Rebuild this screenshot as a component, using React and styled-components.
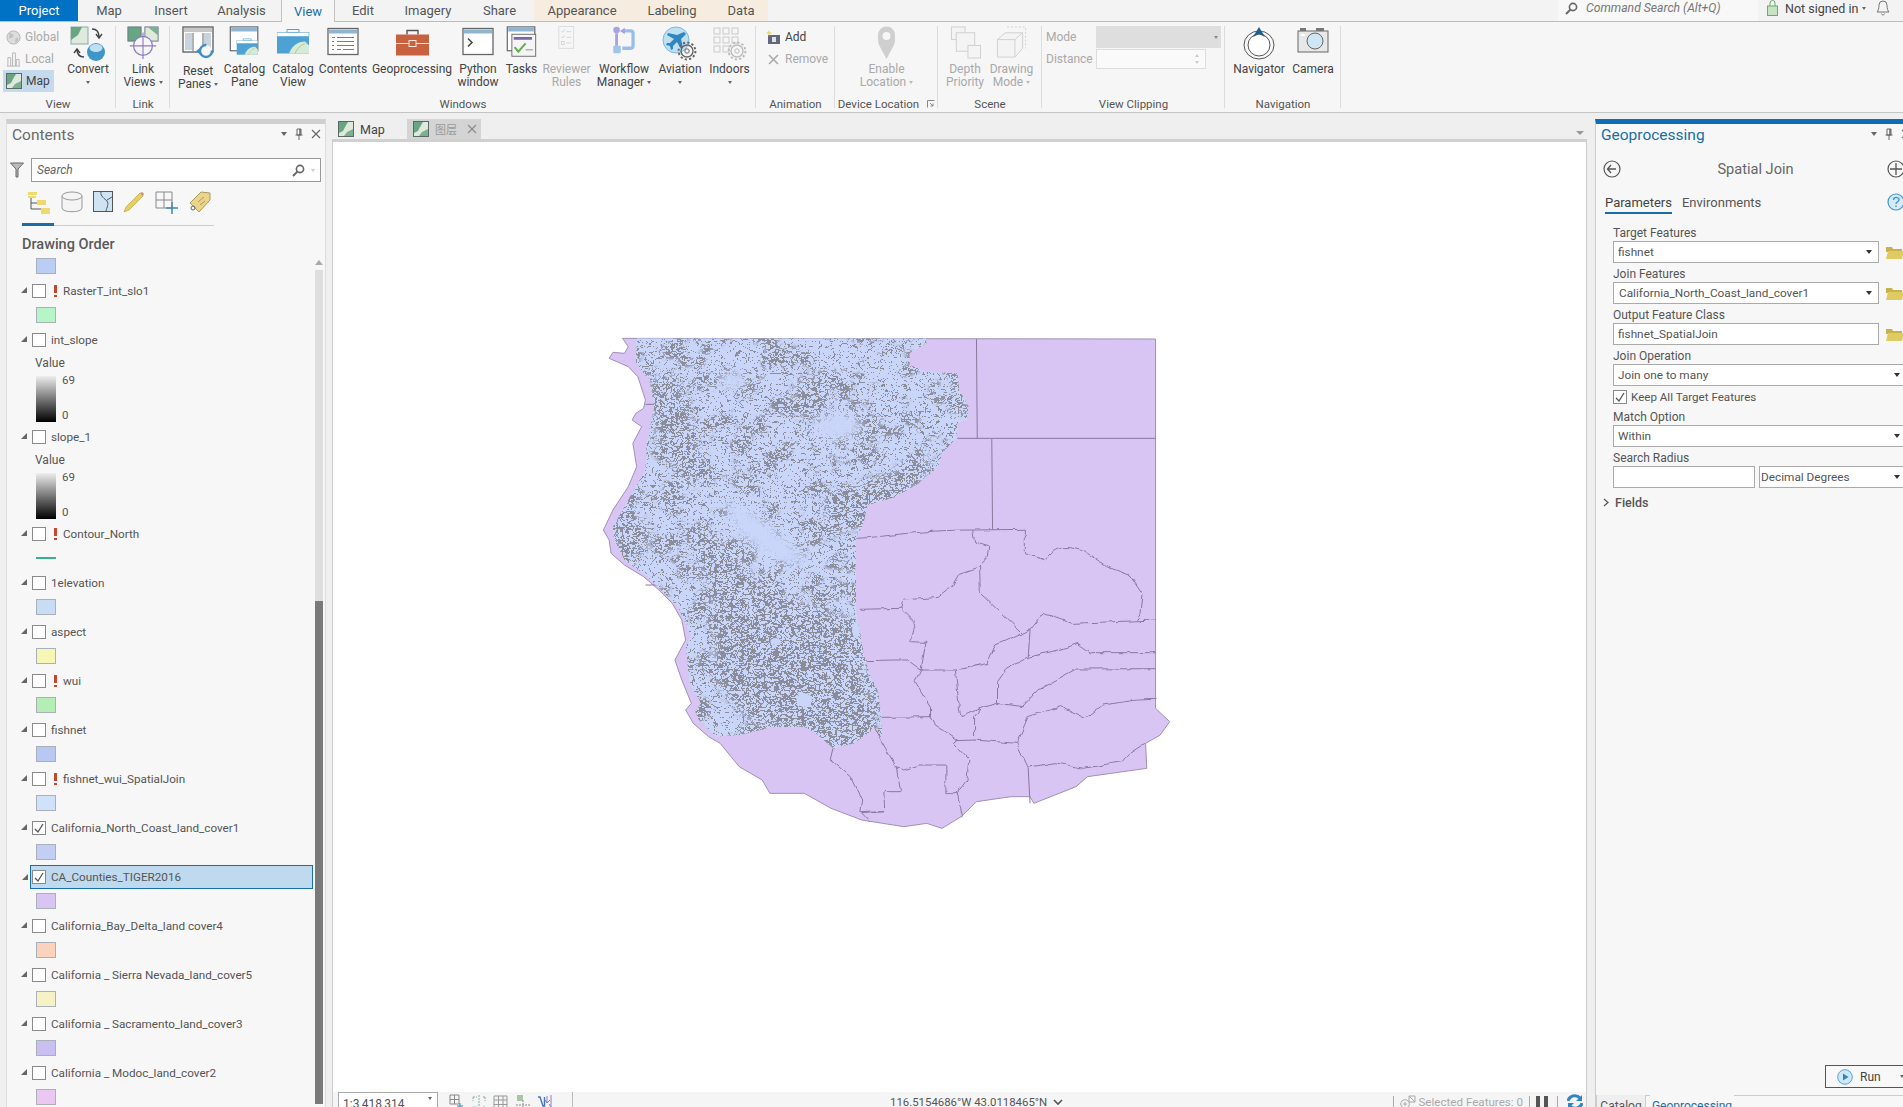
import React from "react";
import styled, { createGlobalStyle } from "styled-components";

const Global = createGlobalStyle`
  html, body { margin: 0; padding: 0; background: #efefef; overflow: hidden; }
  * { box-sizing: border-box; }
  body { font-family: Roboto, "Liberation Sans", "Noto Sans CJK SC", sans-serif; }
`;

const Page = styled.div`
  width: 1903px; height: 1107px; display: flex; flex-direction: column; overflow: hidden;
  background: #efefef; color: #444; font-size: 12px;
`;
const TopBar = styled.div`
  height: 22px; flex: none; display: flex; background: #f3f3f3; border-bottom: 1px solid #bdbdbd;
`;
const Tab = styled.div`
  width: ${p => p.$w}px; height: ${p => (p.$active ? 22 : 21)}px; display: flex; align-items: center; justify-content: center;
  font-size: 13px; padding-bottom: 0;
  color: ${p => (p.$project ? "#fff" : p.$active ? "#1a6ea8" : "#555")};
  background: ${p => (p.$project ? "#0072c6" : p.$active ? "#f6f6f6" : p.$ctx ? "#f6ecdf" : "transparent")};
  ${p => p.$active && "border: 1px solid #c4c4c4; border-width: 0 1px;"}
`;
const Spacer = styled.div`flex: 1;`;
const CommandSearch = styled.div`
  width: 200px; height: 21px; background: #f8f8f8; display: flex; align-items: center; gap: 8px; padding: 0 0 5px 7px;
  font-style: italic; color: #777; font-size: 12.2px;
`;
const SignIn = styled.div`
  width: 145px; height: 21px; display: flex; align-items: center; padding: 0 0 5px 9px; font-size: 12.5px; color: #444;
`;
const SignText = styled.span`margin-left: 7px; display: flex; align-items: center; gap: 4px;`;
const Bell = styled.span`margin-left: 10px; display: flex;`;

const Ribbon = styled.div`
  height: 91px; flex: none; display: flex; background: #f6f6f6; border-bottom: 1px solid #c4c4c4;
`;
const Group = styled.div`
  width: ${p => p.$w}px; flex: none; display: flex; flex-direction: column; position: relative;
  &::after { content: ""; position: absolute; right: 0; top: 4px; bottom: 4px; width: 1px; background: #dcdcdc; }
`;
const GroupBody = styled.div`
  height: 73px; display: flex; gap: ${p => p.$gap || 0}px; padding: 4px 0 0 ${p => p.$pad || 0}px;
`;
const GroupLabel = styled.div`
  height: 17px; display: flex; align-items: center; justify-content: center; gap: 8px; font-size: 11.5px; color: #555;
`;
const BigButton = styled.div`
  width: ${p => p.$w}px; flex: none; display: flex; flex-direction: column; align-items: center;
  color: ${p => (p.$off ? "#a9a9a9" : "#444")}; font-size: 12px; line-height: 13px; text-align: center;
`;
const BigIcon = styled.div`
  height: ${p => p.$h || 36}px; flex: none; display: flex; align-items: flex-start; justify-content: center; margin-bottom: 1px;
`;
const LabelLine = styled.div`
  white-space: nowrap; display: flex; align-items: center; gap: 3px; height: 13px;
`;
const Caret = styled.span`
  display: inline-block; width: 0; height: 0; border: ${p => (p.$big ? 3 : 2.5)}px solid transparent; border-top: ${p => (p.$big ? 4 : 3)}px solid ${p => p.$c || "#666"}; border-bottom: 0;
`;
const SmallCol = styled.div`
  width: ${p => p.$w}px; flex: none; display: flex; flex-direction: column;
`;
const SmallButton = styled.div`
  height: 22px; display: flex; align-items: center; gap: 4px; padding-left: ${p => p.$pad || 3}px; font-size: 12px;
  color: ${p => (p.$off ? "#a9a9a9" : "#444")};
  background: ${p => (p.$on ? "#c5dbed" : "transparent")};
`;
const ClipGrid = styled.div`
  display: grid; grid-template-columns: 50px 125px; grid-auto-rows: 22px; align-items: center; padding-left: 4px; color: #a9a9a9; font-size: 12px;
`;
const ClipCombo = styled.div`
  height: 22px; background: #dedede; display: flex; align-items: center; justify-content: flex-end; padding-right: 3px;
`;
const ClipInput = styled.div`
  width: 110px; height: 20px; background: #fafafa; border: 1px solid #ddd; display: flex; flex-direction: column; align-items: flex-end; justify-content: center; gap: 4px; padding-right: 6px;
`;
const SpinUp = styled.span`width: 0; height: 0; border: 2.5px solid transparent; border-bottom: 3px solid #ccc; border-top: 0;`;
const SpinDown = styled.span`width: 0; height: 0; border: 2.5px solid transparent; border-top: 3px solid #ccc; border-bottom: 0;`;

const Workspace = styled.div`
  flex: 1; min-height: 0; display: flex; padding: 6px 0 0 6px;
`;

/* Contents */
const Contents = styled.div`
  width: 320px; height: 1000px; flex: none; position: relative; background: #f7f7f7; border-top: 5px solid #cfcfcf; border-left: 1px solid #ddd; border-right: 1px solid #ddd;
`;
const PaneHeader = styled.div`
  height: 22px; display: flex; align-items: center; padding: 0 4px 0 ${p => p.$pad || 5}px; font-size: 15.5px; color: ${p => p.$c || "#6a6a6a"};
`;
const PaneTools = styled.div`
  margin-left: auto; display: flex; align-items: center; gap: 8px; padding-bottom: 3px;
`;
const SearchRow = styled.div`
  margin-top: 12px; height: 24px; display: flex; align-items: center; padding-left: 3px;
`;
const SearchBox = styled.div`
  width: 290px; height: 24px; margin-left: 7px; background: #fff; border: 1px solid #999; display: flex; align-items: center;
  padding: 0 5px; font-style: italic; color: #666; font-size: 12px; gap: 6px;
`;
const SearchText = styled.span`flex: 1;`;
const ViewTabs = styled.div`
  margin: 3px 0 0 15px; width: 192px; height: 41px; border-bottom: 1px solid #ccc; position: relative; display: flex; align-items: flex-start; gap: 10px; padding: 6px 0 0 5px;
  &::after { content: ""; position: absolute; left: 0; bottom: -1px; width: 32px; height: 3px; background: #1a6ea8; }
`;
const OrderTitle = styled.div`
  margin: 9px 0 0 15px; height: 19px; line-height: 20px; font-size: 14.5px; font-weight: 500; color: #5a5a5a;
`;
const LayerList = styled.div`display: flex; flex-direction: column;`;
const Row = styled.div`
  height: 24px; margin-left: 23px; width: 283px; display: flex; align-items: center; position: relative; font-size: 11.7px; color: #555;
  padding-left: 2px;
  ${p => p.$sel && "background: #bfd9ee; border: 1px solid #1a6ea8; padding-left: 1px;"}
`;
const Triangle = styled.span`
  position: absolute; left: -9px; top: 8px; width: 0; height: 0; border-style: solid; border-width: 0 0 6px 6px; border-color: transparent transparent #666 transparent;
`;
const Check = styled.span`
  width: 14px; height: 14px; flex: none; background: #fff; border: 1px solid #8a8a8a; display: flex; align-items: center; justify-content: center;
`;
const Warn = styled.span`
  width: 3px; margin-left: 8px; height: 12px; position: relative; flex: none; margin-top: -1px;
  &::before { content: ""; position: absolute; left: 0; top: 0; width: 3px; height: 8px; background: #c8452e; }
  &::after { content: ""; position: absolute; left: 0; top: 10px; width: 3px; height: 2px; background: #c8452e; }
`;
const LayerName = styled.span`
  margin-left: ${p => (p.$warn ? 6 : 5)}px; white-space: nowrap;
`;
const Legend = styled.div`
  height: ${p => p.$h || 25}px; flex: none; padding: ${p => (p.$top != null ? p.$top : 4)}px 0 0 29px;
`;
const Swatch = styled.div`
  width: 20px; height: 16px; background: ${p => p.$c}; border: 1px solid #a9b0b8;
`;
const LineSwatch = styled.div`
  width: 20px; height: 16px; display: flex; align-items: center;
  &::after { content: ""; width: 100%; height: 2px; background: #3bb08f; }
`;
const RampTitle = styled.div`height: 22px; line-height: 22px; font-size: 12px; color: #555; margin-left: -1px;`;
const RampRow = styled.div`display: flex; gap: 6px; margin-top: 2px;`;
const Ramp = styled.div`width: 20px; height: 46px; background: linear-gradient(#eee, #000);`;
const RampLabels = styled.div`height: 49px; margin-top: -3px; display: flex; flex-direction: column; justify-content: space-between; font-size: 11.5px; line-height: 14px; color: #555;`;
const ScrollTrack = styled.div`
  position: absolute; right: 2px; top: 146px; bottom: 15px; width: 8px; background: #dedede;
`;
const ScrollThumb = styled.div`
  position: absolute; left: 0; right: 0; top: 331px; bottom: 0; background: #7a7a7a;
`;
const ScrollArrow = styled.span`
  position: absolute; right: 2px; top: 136px; width: 0; height: 0; border: 4px solid transparent; border-bottom: 5px solid #aaa; border-top: 0;
`;

/* Map */
const MapPane = styled.div`
  width: 1255px; margin-left: 6px; flex: none; display: flex; flex-direction: column; height: 1000px; position: relative;
`;
const MapTabs = styled.div`
  height: 20px; flex: none; display: flex; padding-left: 6px;
`;
const MapTab = styled.div`
  height: 20px; flex: none; display: flex; align-items: center; gap: 6px; padding-left: ${p => p.$pad || 0}px; width: ${p => p.$w}px; font-size: 12.5px;
  color: ${p => (p.$off ? "#8a8a8a" : "#444")}; background: ${p => (p.$off ? "#d4d4d4" : "transparent")}; white-space: nowrap;
`;
const CjkLabel = styled.span`
  font-family: "Noto Sans CJK SC", sans-serif; font-size: 11px; color: #9a9a9a; margin-right: 4px; white-space: nowrap;
`;
const PaneMenu = styled.span`
  position: absolute; right: 3px; top: 12px; width: 0; height: 0; border: 4px solid transparent; border-top: 4px solid #999; border-bottom: 0;
`;
const MapFrame = styled.div`
  flex: 1; border-top: 3px solid #d0d0d0; border-left: 1px solid #ccc; border-right: 1px solid #ccc; display: flex; flex-direction: column;
`;
const Canvas = styled.div`
  height: 950px; flex: none; position: relative; background: #fff;
`;
const MapSvg = styled.svg`
  position: absolute; left: 257px; top: 178px; width: 600px; height: 520px;
`;
const StatusBar = styled.div`
  height: 30px; flex: none; background: #f5f5f5; display: flex; align-items: flex-start; font-size: 12px; color: #555;
`;
const ScaleBox = styled.div`
  margin-left: 5px; width: 100px; height: 24px; background: #fff; border: 1px solid #aaa; padding: 4px 5px 0 4px; display: flex; justify-content: space-between; color: #555; font-size: 12px;
`;
const StatusIcons = styled.div`display: flex; align-items: center; gap: 6px; height: 20px; width: 124px; margin-left: 11px; padding-right: 6px; border-right: 1px solid #bbb;`;
const Coords = styled.div`
  margin-left: 317px; height: 20px; display: flex; align-items: center; gap: 6px; font-size: 11.4px; color: #555; white-space: nowrap;
`;
const SelectBar = styled.div`
  margin-left: auto; margin-right: 3px; height: 20px; display: flex; align-items: center; color: #aaa; font-size: 11.6px; white-space: nowrap;
`;
const BarSep = styled.span`width: 1px; height: 13px; background: #aaa; margin: 0 ${p => p.$m || 6}px;`;
const PauseBars = styled.span`
  width: 12px; height: 13px; border-left: 4px solid #555; border-right: 4px solid #555;
`;

/* Geoprocessing */
const GeoPane = styled.div`
  width: 320px; margin-left: 8px; flex: none; height: 1000px; display: flex; flex-direction: column; background: #f7f7f7; border-left: 1px solid #ccc; border-top: 5px solid #0f6db5;
`;
const ToolRow = styled.div`
  margin-top: 11px; height: 24px; display: flex; align-items: center; position: relative; padding-left: 7px; width: 309px;
`;
const ToolTitle = styled.div`
  position: absolute; left: 0; width: 319px; text-align: center; font-size: 14.6px; color: #666;
`;
const RightEdge = styled.span`margin-left: auto; display: flex;`;
const ParamTabs = styled.div`
  margin-top: 12px; height: 23px; display: flex; padding-left: 9px; gap: 10px; width: 309px; align-items: flex-start; font-size: 13px; color: #555;
`;
const ParamTab = styled.div`
  height: 21px; line-height: 20px; ${p => p.$on && "border-bottom: 2px solid #1a6ea8; color: #444;"}
`;
const Form = styled.div`
  flex: 1; margin-top: 6px; padding-left: 17px; display: flex; flex-direction: column;
`;
const Field = styled.div`display: flex; flex-direction: column;`;
const FieldLabel = styled.div`
  height: 19px; padding-top: 4px; line-height: 14px; font-size: 12px; color: #555;
`;
const InputRow = styled.div`display: flex; align-items: center; gap: ${p => p.$gap || 7}px;`;
const Input = styled.div`
  width: ${p => p.$w}px; height: 22px; flex: none; background: #fff; border: 1px solid #aaa; display: flex; align-items: center; justify-content: space-between;
  padding: 0 ${p => p.$pr || 6}px 0 ${p => p.$pl || 4}px; font-size: 11.8px; color: #555; white-space: nowrap;
`;
const CheckRow = styled.div`height: 20px; display: flex; align-items: center; gap: 4px; font-size: 11.6px; color: #555; padding-top: 2px;`;
const FieldsRow = styled.div`
  height: 24px; margin-top: 2px; margin-left: -10px; display: flex; align-items: center; gap: 6px; font-size: 12.5px; font-weight: 500; color: #555;
`;
const Footer = styled.div`
  height: 30px; flex: none; display: flex; padding-left: 212px; margin-top: auto;
`;
const RunButton = styled.div`
  width: 100px; height: 23px; flex: none; border: 1px solid #555; background: #f8f8f8; display: flex; align-items: center; padding-left: 11px; gap: 7px; font-size: 12px; color: #444;
`;
const RunCaret = styled.span`margin-left: 12px; display: flex;`;
const BottomTabs = styled.div`
  height: 24px; flex: none; border-top: 1px solid #ccc; display: flex; gap: 4px;
`;
const BottomTab = styled.div`
  height: 24px; margin-top: -1px; width: ${p => p.$w}px; padding-top: 4px; text-align: center; font-size: 12px; color: ${p => (p.$on ? "#1a6ea8" : "#555")};
  ${p => p.$on ? "background: #f7f7f7;" : "background: #efefef; border: 1px solid #ccc; border-top: 0;"}
`;

const Ico = styled.svg`
  width: ${p => p.$w || 32}px; height: ${p => p.$h || p.$w || 32}px; flex: none; display: block;
`;

/* ---------- icons ---------- */
const MapThumb = ({ s = 16 }) => (
  <Ico $w={s} viewBox="0 0 16 16">
    <rect x=".5" y=".5" width="15" height="15" fill="#dfe9dc" stroke="#5c6a66" />
    <path d="M1 1h9L7 6 5 10 1 12z" fill="#6aa583" />
    <path d="M15 8v7H6l3-4z" fill="#7db08f" />
  </Ico>
);
const GlobeIcon = () => (
  <Ico $w={15} viewBox="0 0 16 16"><circle cx="8" cy="8" r="7" fill="#ddd" stroke="#b5b5b5" /><path d="M4 3l4 2-1 3-4 1M10 9l3-1 0 3-3 3z" fill="#c0c0c0" /></Ico>
);
const LocalIcon = () => (
  <Ico $w={15} viewBox="0 0 16 16"><path d="M2 15V6h3v9M7 15V1h3v14M11 15V8h3v7M1 15h14" fill="none" stroke="#b5b5b5" /></Ico>
);
const ConvertIcon = () => (
  <Ico $w={36} viewBox="0 0 36 36">
    <rect x="1" y="1" width="17" height="17" fill="#dfe9dc" stroke="#8aa" />
    <path d="M1 1h11L8 9l-7 5z" fill="#6aa583" />
    <path d="M22 3c5 0 7 3 7 8M26 8l3 4 3-4" fill="none" stroke="#444" strokeWidth="1.4" />
    <path d="M14 31c-5 0-7-3-7-8M4 27l3-4 3 4" fill="none" stroke="#444" strokeWidth="1.4" />
    <circle cx="26" cy="26" r="9" fill="#3f97c9" /><ellipse cx="26" cy="22" rx="6.5" ry="4" fill="#bfe0f0" />
  </Ico>
);
const LinkIcon = () => (
  <Ico $w={34} viewBox="0 0 34 36">
    <rect x="1" y="1" width="14" height="15" fill="#6aa583" stroke="#678" />
    <rect x="19" y="1" width="14" height="15" fill="#dfe9dc" stroke="#678" />
    <path d="M22 1h11v9z" fill="#7db08f" />
    <circle cx="17" cy="21" r="10" fill="#f6f6f6" stroke="#8f7cc4" strokeWidth="1.3" />
    <path d="M17 7v28M3 21h28" stroke="#8f7cc4" strokeWidth="1.2" />
  </Ico>
);
const ResetIcon = () => (
  <Ico $w={33} viewBox="0 0 33 33">
    <rect x="1" y="1" width="30" height="25" fill="#fff" stroke="#666" strokeWidth="1.4" />
    <rect x="2" y="2" width="28" height="4" fill="#c7c7c7" />
    <rect x="3" y="7" width="7" height="17" fill="#c7d4de" /><rect x="22" y="7" width="7" height="17" fill="#c7d4de" />
    <path d="M11 7v18M21 7v18" stroke="#666" />
    <circle cx="24" cy="25" r="6" fill="#f6f6f6" stroke="#3f8fc4" strokeWidth="2.4" strokeDasharray="28 8" />
    <path d="M14 25l5-4v8z" fill="#3f8fc4" />
  </Ico>
);
const WinFrame = ({ children, w = 30, h = 26 }) => (
  <g>
    <rect x="1" y="1" width={w} height={h} fill="#fff" stroke="#666" strokeWidth="1.3" />
    <rect x="2" y="2" width={w - 2} height="4" fill="#8fb5d0" />
    {children}
  </g>
);
const FolderMap = ({ x = 0, y = 0, s = 1 }) => (
  <g transform={`translate(${x} ${y}) scale(${s})`}>
    <path d="M10 0h12v3H10z" fill="none" stroke="#5aa3cf" />
    <rect x="0" y="3" width="32" height="4" fill="#fff" stroke="#5aa3cf" strokeWidth=".6" />
    <rect x="0" y="7" width="32" height="17" fill="#4ea1d3" />
    <path d="M12 24c3-8 9-12 16-12l4 4v8z" fill="#d6ead8" />
    <path d="M18 24c2-5 5-8 10-10" fill="none" stroke="#b8c78f" />
  </g>
);
const CatalogPaneIcon = () => (
  <Ico $w={33} viewBox="0 0 33 36"><WinFrame /><FolderMap x="8" y="14" s=".72" /></Ico>
);
const CatalogViewIcon = () => <Ico $w={33} viewBox="0 0 33 32"><FolderMap y="3" /></Ico>;
const ContentsIcon = () => (
  <Ico $w={33} viewBox="0 0 33 30">
    <WinFrame>
      <path d="M5 10h3M10 10h17M5 14h2M10 14h3M15 14h12M5 18h2M10 18h17M5 22h2M10 22h4M16 22h11" stroke="#4a8cb8" />
      <path d="M11 14h4" stroke="#d0703c" />
    </WinFrame>
  </Ico>
);
const GeoIcon = () => (
  <Ico $w={33} viewBox="0 0 33 26">
    <path d="M11 5V1h11v4" fill="none" stroke="#555" strokeWidth="1.4" />
    <rect x="0" y="5" width="33" height="21" fill="#c8613e" />
    <path d="M0 14h33" stroke="#f3e4dc" />
    <rect x="13" y="11" width="7" height="6" fill="#c8613e" stroke="#f3e4dc" />
  </Ico>
);
const PythonIcon = () => (
  <Ico $w={33} viewBox="0 0 33 30">
    <WinFrame><path d="M6 11l4 4-4 4" fill="none" stroke="#444" strokeWidth="1.5" /></WinFrame>
  </Ico>
);
const TasksIcon = () => (
  <Ico $w={33} viewBox="0 0 33 36">
    <WinFrame />
    <rect x="6" y="9" width="26" height="24" fill="#f5f5f5" stroke="#666" />
    <rect x="8" y="12" width="20" height="3" fill="#7a66a8" />
    <path d="M9 23l4 5 8-9" fill="none" stroke="#5cb04e" strokeWidth="2.2" />
    <path d="M21 26h8" stroke="#888" />
  </Ico>
);
const ReviewerIcon = () => (
  <Ico $w={24} viewBox="0 0 24 34">
    <rect x=".5" y=".5" width="21" height="31" fill="#f6f6f6" stroke="#d2d2d2" />
    <path d="M4 7l2 2 3-4M4 15l2 2 3-4" fill="none" stroke="#c5c5c5" /><path d="M11 8h7M11 16h7M11 24h7" stroke="#ccc" /><rect x="4" y="22" width="4" height="4" fill="none" stroke="#ccc" />
  </Ico>
);
const WorkflowIcon = () => (
  <Ico $w={28} viewBox="0 0 28 34">
    <circle cx="5" cy="5" r="4" fill="#a9a2e0" /><rect x="1" y="24" width="9" height="9" rx="1" fill="#9fc4ec" />
    <path d="M5 9v15" stroke="#a9a2e0" strokeWidth="3.5" />
    <path d="M13 6h9a3 3 0 0 1 3 3v15a3 3 0 0 1-3 3H12" fill="none" stroke="#98bdec" strokeWidth="4" />
    <path d="M9 6l6-4v8z" fill="#a9a2e0" />
  </Ico>
);
const GearDot = ({ x, y, c }) => (
  <g>
    <circle cx={x} cy={y} r="6" fill="none" stroke={c} strokeWidth="1.4" />
    <circle cx={x} cy={y} r="8.4" fill="none" stroke={c} strokeWidth="2" strokeDasharray="2.2 2.2" />
    <circle cx={x} cy={y} r="2.2" fill="none" stroke={c} />
  </g>
);
const AviationIcon = () => (
  <Ico $w={36} viewBox="0 0 36 36">
    <circle cx="14" cy="14" r="13" fill="#bfe0f2" stroke="#7cb9dc" />
    <path d="M22 6l2 2-5 5 2 9-2 1-4-7-4 4 0 3-2 1-1-4-4-1 1-2 3 0 4-4-7-4 1-2 9 2z" fill="#2f86c0" />
    <GearDot x="25" y="25" c="#666" />
  </Ico>
);
const IndoorsIcon = () => (
  <Ico $w={36} viewBox="0 0 36 36">
    <g fill="none" stroke="#c9c9c9">
      <rect x="2" y="2" width="6" height="6" /><rect x="11" y="2" width="6" height="6" /><rect x="20" y="2" width="6" height="6" />
      <rect x="2" y="11" width="6" height="6" /><rect x="11" y="11" width="6" height="6" /><rect x="20" y="11" width="6" height="6" />
      <rect x="2" y="20" width="6" height="6" /><rect x="11" y="20" width="6" height="6" />
    </g>
    <GearDot x="25" y="25" c="#bbb" />
  </Ico>
);
const AddIcon = () => (
  <Ico $w={15} viewBox="0 0 15 15"><rect x="2" y="5" width="12" height="9" fill="#667" /><rect x="6" y="7" width="4" height="5" fill="#d8e4ec" /><path d="M3 0l1 2 2 1-2 1-1 2-1-2-2-1 2-1z" fill="#efd96b" /></Ico>
);
const RemoveIcon = () => (
  <Ico $w={15} viewBox="0 0 15 15"><path d="M3 3l9 9M12 3l-9 9" stroke="#aaa" strokeWidth="1.6" /></Ico>
);
const PinIcon = () => (
  <Ico $w={19} $h={34} viewBox="0 0 19 34"><path d="M9.5 33L2 19C1 16 1 14 1 9a8.5 8.5 0 0 1 17 0c0 5 0 7-1 10z" fill="#cfcfcf" /><circle cx="9.5" cy="10" r="4" fill="#f6f6f6" /></Ico>
);
const DepthIcon = () => (
  <Ico $w={33} viewBox="0 0 33 34"><g fill="#f4f4f4" stroke="#cfcfcf"><rect x="2" y="1" width="14" height="13" /><rect x="7" y="7" width="19" height="19" /><rect x="19" y="20" width="13" height="13" /></g></Ico>
);
const DrawingIcon = () => (
  <Ico $w={33} viewBox="0 0 33 34"><path d="M2 14h18v18H2zM2 14l8-7h18l-8 7M20 32l8-9V7" fill="#f4f4f4" stroke="#cfcfcf" /><path d="M12 1h19v22" fill="none" stroke="#cfcfcf" strokeDasharray="2 2" /></Ico>
);
const NavigatorIcon = () => (
  <Ico $w={32} $h={34} viewBox="0 0 32 34">
    <ellipse cx="16" cy="19" rx="15" ry="14" fill="#f8f8f8" stroke="#555" /><ellipse cx="16" cy="19" rx="11" ry="11" fill="#fff" stroke="#555" />
    <path d="M16 1l6 10-6-3-6 3z" fill="#1d5e93" />
  </Ico>
);
const CameraIcon = () => (
  <Ico $w={32} $h={30} viewBox="0 0 32 30">
    <rect x="1" y="5" width="30" height="21" fill="#e8e8e8" stroke="#666" />
    <rect x="3" y="2" width="6" height="3" fill="#777" /><rect x="19" y="2" width="8" height="3" fill="#777" />
    <circle cx="18" cy="15" r="8" fill="#cfe6f5" stroke="#666" />
    <rect x="4" y="8" width="4" height="2" fill="#fff" />
  </Ico>
);
const MagIcon = ({ c = "#666" }) => (
  <Ico $w={13} viewBox="0 0 13 13"><circle cx="8" cy="5" r="3.6" fill="none" stroke={c} strokeWidth="1.6" /><path d="M5.4 7.6L1 12" stroke={c} strokeWidth="2" /></Ico>
);
const LockIcon = () => (
  <Ico $w={11} $h={16} viewBox="0 0 11 16"><path d="M3 6V3a2.5 2.5 0 0 1 5 0v3" fill="none" stroke="#6fa76f" /><rect x=".5" y="6" width="10" height="9.5" fill="#c7e3c0" stroke="#6fa76f" /></Ico>
);
const BellIcon = () => (
  <Ico $w={14} $h={16} viewBox="0 0 14 16"><path d="M7 1a4 4 0 0 1 4 4c0 4 1 6 2 7H1c1-1 2-3 2-7a4 4 0 0 1 4-4zM5.5 13.5c.3 2 2.7 2 3 0" fill="none" stroke="#777" /></Ico>
);
const Launcher = () => (
  <Ico $w={8} viewBox="0 0 8 8"><path d="M.5 7.5v-7h7M3 3l3 3M6 3.5V6H3.500" fill="none" stroke="#888" /></Ico>
);
const PinPane = () => (
  <Ico $w={8} $h={12} viewBox="0 0 8 12"><path d="M2 1h4v6H2zM.5 7h7M4 7v5" fill="none" stroke="#666" /><path d="M5 1v6" stroke="#666" strokeWidth="1.5" /></Ico>
);
const CloseGlyph = ({ c = "#666" }) => (
  <Ico $w={10} viewBox="0 0 10 10"><path d="M1 1l8 8M9 1L1 9" stroke={c} strokeWidth="1.1" /></Ico>
);
const FilterIcon = () => (
  <Ico $w={14} $h={16} viewBox="0 0 14 16"><path d="M.5 1h13L8 7v8H6V7z" fill="#bbb" stroke="#666" /></Ico>
);
const CylinderIcon = () => (
  <Ico $w={22} $h={22} viewBox="0 0 22 22"><path d="M1 5v12c0 5 20 5 20 0V5" fill="#f4f4f4" stroke="#999" /><ellipse cx="11" cy="5" rx="10" ry="4" fill="#f4f4f4" stroke="#999" /></Ico>
);
const HierIcon = () => (
  <Ico $w={24} viewBox="0 0 24 24"><path d="M4 6v12h14M4 12h10" fill="none" stroke="#555" /><rect x="1" y="1" width="9" height="3" fill="#ecd96f" /><rect x="1" y="5" width="8" height="2" fill="#ecd96f" /><rect x="10" y="9" width="9" height="5" fill="#ecd96f" /><rect x="14" y="17" width="9" height="6" fill="#ecd96f" /></Ico>
);
const MapBoxIcon = () => (
  <Ico $w={20} $h={21} viewBox="0 0 20 21"><rect x=".5" y=".5" width="19" height="20" fill="#cfe4f3" stroke="#555" /><path d="M8 1c-1 4 4 7 6 9 2 3 0 6-1 10M14 9l5-3" fill="none" stroke="#555" /></Ico>
);
const PencilIcon = () => (
  <Ico $w={22} viewBox="0 0 22 22"><path d="M1 21l2-5L17 2l3 3L6 19z" fill="#e9cf5f" stroke="#b7a24e" strokeWidth=".7" /><path d="M17 2l3 3 1-2-2-2z" fill="#d98f7a" /></Ico>
);
const GridPlusIcon = () => (
  <Ico $w={24} viewBox="0 0 24 24"><path d="M1 1h16v16H1zM9 1v16M1 9h16" fill="none" stroke="#888" /><path d="M17 11v12M11 17h12" stroke="#3f86b5" strokeWidth="1.5" /></Ico>
);
const TagIcon = () => (
  <Ico $w={22} viewBox="0 0 22 22"><path d="M1 12L12 1l9 1v7L10 21z" fill="#ecd58a" stroke="#a89a60" /><circle cx="4" cy="17" r="2" fill="none" stroke="#666" /><path d="M9 11l6-5M11 14l5-4" stroke="#a89a60" /></Ico>
);
const Tick = ({ c = "#555" }) => (
  <Ico $w={12} viewBox="0 0 12 12"><path d="M2 7l3 3 5-8" fill="none" stroke={c} strokeWidth="1.3" /></Ico>
);
const Chevron = () => (
  <Ico $w={10} $h={7} viewBox="0 0 10 7"><path d="M1 1l4 4 4-4" fill="none" stroke="#555" strokeWidth="1.6" /></Ico>
);
const FolderIcon = () => (
  <Ico $w={18} $h={13} viewBox="0 0 18 13"><path d="M0 1h6l1 2h9v3H0z" fill="#c9b24c" /><path d="M0 13l2-8h16l-2 8z" fill="#e0cb62" /></Ico>
);
const CircleBack = () => (
  <Ico $w={18} viewBox="0 0 18 18"><circle cx="9" cy="9" r="8" fill="none" stroke="#555" strokeWidth="1.2" /><path d="M13 9H5M8 5L4.500 9 8 13" fill="none" stroke="#555" strokeWidth="1.3" /></Ico>
);
const CirclePlus = () => (
  <Ico $w={18} viewBox="0 0 18 18"><circle cx="9" cy="9" r="8" fill="none" stroke="#555" strokeWidth="1.2" /><path d="M9 3v12M3 9h12" stroke="#555" strokeWidth="1.3" /></Ico>
);
const HelpIcon = () => (
  <Ico $w={18} viewBox="0 0 18 18"><circle cx="9" cy="9" r="8" fill="#d5ebf8" stroke="#3f95cc" strokeWidth="1.2" /><path d="M6.500 7c0-3.500 5.500-3.500 5.500-.2 0 2-3 2-3 4.200M9 12.500v1.500" fill="none" stroke="#3f95cc" strokeWidth="1.4" /></Ico>
);
const RunIcon = () => (
  <Ico $w={16} viewBox="0 0 16 16"><circle cx="8" cy="8" r="7.300" fill="#cfe8f8" stroke="#5aa3cf" /><path d="M6 4.500l5.500 3.500L6 11.500z" fill="#2f86c0" /></Ico>
);
const RefreshIcon = () => (
  <Ico $w={16} viewBox="0 0 16 16"><path d="M1 7a7 7 0 0 1 12-3M15 9a7 7 0 0 1-12 3" fill="none" stroke="#2f86c0" strokeWidth="3" /><path d="M15 1v6H9zM1 15V9h6z" fill="#2f86c0" /></Ico>
);
const SelectGlyph = () => (
  <Ico $w={16} $h={14} viewBox="0 0 16 14"><circle cx="5" cy="9" r="4.300" fill="none" stroke="#aaa" /><path d="M3 9h4M5 7v4M9 1h6v6H9zM9 1l6 6" fill="none" stroke="#aaa" /></Ico>
);
const StatusGlyphs = () => (
  <>
    <Ico $w={16} viewBox="0 0 16 16"><path d="M1 1h9v9H1zM5.500 1v9M1 5.500h9" fill="none" stroke="#888" /><path d="M11 9v6M8 12h6" stroke="#3f86b5" /></Ico>
    <Ico $w={16} viewBox="0 0 16 16"><path d="M2 3h4M2 3v4M14 3h-3M14 3v4M2 13h4M14 13h-3M8 1v14" stroke="#8aa" strokeDasharray="2 1" fill="none" /></Ico>
    <Ico $w={16} viewBox="0 0 16 16"><path d="M1 2h13v13H1zM1 6h13M1 10.500h13M5.500 2v13M10 2v13" fill="none" stroke="#999" /></Ico>
    <Ico $w={16} viewBox="0 0 16 16"><rect x="2" y="1" width="6" height="6" fill="#a8c8a4" /><path d="M1 11h14M8 6v9" stroke="#888" strokeDasharray="2 1" /></Ico>
    <Ico $w={16} viewBox="0 0 16 16"><path d="M1 3h2l3 9h1.500V3" fill="none" stroke="#3f78c0" strokeWidth="1.4" /><path d="M10 2v7M8 6l2 3 3-3M12 10l2 3M14 1v14" fill="none" stroke="#8f7cc4" /></Ico>
  </>
);

/* ---------- map ---------- */
const OUTLINE = "M85,55 L1478,57 L1478,1165 L1515,1205 L1490,1245 L1452,1270 L1455,1345 L1300,1370 L1270,1400 L1160,1450 L1150,1430 L1100,1430 L1010,1445 L970,1490 L920,1525 L880,1510 L820,1520 L710,1500 L630,1465 L560,1420 L470,1420 L450,1380 L390,1340 L340,1270 L310,1250 L270,1210 L250,1170 L265,1150 L240,1080 L222,1020 L250,960 L240,900 L215,850 L180,810 L140,770 L90,735 L55,700 L50,660 L35,630 L60,570 L100,500 L122,440 L112,370 L135,320 L110,300 L120,280 L140,265 L145,240 L125,170 L100,140 L50,115 L60,97 L90,100 L100,80 Z";
const BLUE = "M120,55 L880,55 L880,70 L835,100 L835,135 L880,155 L960,160 L965,210 L990,260 L985,300 L960,310 L960,350 L920,400 L910,440 L860,490 L800,530 L725,555 L715,610 L695,660 L695,870 L715,1000 L730,1060 L755,1120 L765,1250 L745,1225 L690,1270 L635,1285 L590,1240 L560,1220 L470,1222 L395,1245 L330,1250 L285,1200 L275,1175 L290,1150 L260,1090 L250,980 L265,950 L230,860 L150,770 L90,720 L60,650 L60,620 L110,520 L145,450 L148,370 L168,260 L155,180 L120,130 Z";
const STRAIGHT_LINES = [
  "M1010,57 L1012,355", "M960,355 L1478,355", "M1050,357 L1052,628",
  "M1005,1260 L955,1262", "M145,253 L170,253", "M145,795 L185,795", "M1145,1342 L1150,1450",
];
const WIGGLY_LINES = [
  "M697,655 C780,650 860,630 1000,630 L1135,628 L1135,700 L1190,720 C1210,680 1250,670 1300,700 L1350,740 L1410,765 L1445,825 L1440,880 L1428,900",
  "M1000,630 L1005,665 L1042,680 L1038,710 L1018,730 L1020,820 L1130,940 L1150,930 L1185,880 L1260,910 L1478,900",
  "M1018,740 L965,760 L945,800 L910,832 L820,840 L815,865 L705,868",
  "M815,865 L850,905 L835,965 L878,967 L865,1050 L830,1020 L790,1020 L720,1022",
  "M865,1050 L955,1050 L1040,1030 L1060,975 L1130,940",
  "M1150,930 L1145,1012 L1240,985 L1275,970 L1310,998 L1478,998",
  "M1145,1012 L1090,1045 L1065,1085 L1065,1150 L1130,1160 L1170,1110 L1270,1047 L1478,1046",
  "M955,1050 L965,1165 L970,1190 L1020,1165 L1065,1150",
  "M1020,1165 L1005,1190 L1005,1260 L1115,1270 L1145,1190 L1230,1160 L1295,1195 L1340,1155 L1430,1140 L1478,1138",
  "M865,1050 L850,1085 L890,1160 L890,1190 L765,1192",
  "M890,1190 L900,1215 L960,1260 L950,1270 L990,1320 L985,1380 L960,1418 L930,1418 L930,1335 L860,1335 L820,1350 L800,1340 L760,1260 L745,1225",
  "M1115,1270 L1145,1342 L1215,1328 L1290,1345 L1390,1325 L1410,1300 L1450,1270",
  "M635,1285 L628,1318 L680,1370 L710,1440 L705,1475 L770,1472 L768,1415 L812,1415 L800,1340",
  "M960,1418 L965,1450 L975,1495",
  "M770,1472 L710,1478 L730,1505",
];
const NOISE_RGB = "0 0 0 0 0.54  0 0 0 0 0.55  0 0 0 0 0.6  1 0 0 0 0";

const CaliforniaMap = () => (
  <MapSvg viewBox="0 0 1568 1560" preserveAspectRatio="none">
    <defs>
      <clipPath id="blueClip"><path d={BLUE} /></clipPath>
      <filter id="veinsThin" x="0" y="0" width="100%" height="100%" colorInterpolationFilters="sRGB">
        <feTurbulence type="fractalNoise" baseFrequency="0.055 0.062" numOctaves="2" seed="7" />
        <feColorMatrix type="matrix" values={NOISE_RGB} />
        <feComponentTransfer><feFuncA type="discrete" tableValues="0 0 0 0 0 0 0 0 0 0 0 0 1 0 0 0 0 0 0 0 0 0 0 0 0" /></feComponentTransfer>
      </filter>
      <filter id="veinsDense" x="0" y="0" width="100%" height="100%" colorInterpolationFilters="sRGB">
        <feTurbulence type="fractalNoise" baseFrequency="0.07 0.08" numOctaves="2" seed="21" />
        <feColorMatrix type="matrix" values={NOISE_RGB} />
        <feComponentTransfer><feFuncA type="discrete" tableValues="0 0 0 0 0 0 0 0 0 0 0 1 1 1 0 0 0 0 0 0 0 0 0 0 0" /></feComponentTransfer>
      </filter>
      <filter id="patches" x="0" y="0" width="100%" height="100%" colorInterpolationFilters="sRGB">
        <feTurbulence type="fractalNoise" baseFrequency="0.016 0.014" numOctaves="3" seed="11" />
        <feColorMatrix type="matrix" values="0 0 0 0 1  0 0 0 0 1  0 0 0 0 1  1 0 0 0 0" />
        <feComponentTransfer><feFuncA type="discrete" tableValues="0 0 0 0 0 0 0 0 0 0 0 1 1 1 1 1 1 1 1 1" /></feComponentTransfer>
        <feGaussianBlur stdDeviation="5" />
      </filter>
      <filter id="soft" x="-30%" y="-30%" width="160%" height="160%"><feGaussianBlur stdDeviation="14" /></filter>
      <filter id="wobble" filterUnits="userSpaceOnUse" x="0" y="0" width="1568" height="1560">
        <feTurbulence type="fractalNoise" baseFrequency="0.035" numOctaves="2" seed="3" />
        <feDisplacementMap in="SourceGraphic" scale="14" xChannelSelector="R" yChannelSelector="G" />
      </filter>
      <mask id="denseMask" maskUnits="userSpaceOnUse" x="0" y="0" width="1568" height="1560">
        <rect width="1568" height="1560" filter="url(#patches)" />
        <g fill="#fff" filter="url(#soft)">
          <path d="M150,180 L230,160 L300,420 L250,500 L170,360 Z" />
          <ellipse cx="580" cy="230" rx="50" ry="70" />
          <path d="M610,530 L900,400 L860,500 L720,600 L620,660 Z" />
          <path d="M230,600 L330,640 L470,820 L700,900 L750,1240 L640,1270 L420,1210 L330,1100 L310,800 Z" />
          <ellipse cx="110" cy="650" rx="50" ry="60" />
        </g>
        <g fill="#000" filter="url(#soft)">
          <path d="M340,540 L420,570 L580,720 L520,740 L400,660 Z" />
          <ellipse cx="650" cy="320" rx="60" ry="35" />
          <ellipse cx="370" cy="180" rx="30" ry="28" />
          <ellipse cx="780" cy="230" rx="45" ry="60" />
        </g>
      </mask>
      <mask id="thinMask" maskUnits="userSpaceOnUse" x="0" y="0" width="1568" height="1560">
        <rect width="1568" height="1560" fill="#fff" />
        <g fill="#000" filter="url(#soft)">
          <path d="M340,540 L420,570 L580,720 L520,740 L400,660 Z" />
          <ellipse cx="650" cy="320" rx="60" ry="35" />
          <ellipse cx="370" cy="180" rx="30" ry="28" />
        </g>
      </mask>
    </defs>
    <path d={OUTLINE} fill="#d9c5f3" stroke="#a08fb9" strokeWidth="1" vectorEffect="non-scaling-stroke" />
    {STRAIGHT_LINES.map(d => (
      <path key={d} d={d} fill="none" stroke="#8a789f" strokeWidth="1" vectorEffect="non-scaling-stroke" />
    ))}
    <g filter="url(#wobble)">
      {WIGGLY_LINES.map(d => (
        <path key={d} d={d} fill="none" stroke="#8a789f" strokeWidth="1" vectorEffect="non-scaling-stroke" />
      ))}
    </g>
    <g clipPath="url(#blueClip)">
      <rect width="1568" height="1560" fill="#c9d6fa" />
      <rect width="1568" height="1560" filter="url(#veinsThin)" mask="url(#thinMask)" />
      <rect width="1568" height="1560" filter="url(#veinsDense)" mask="url(#denseMask)" />
      <ellipse cx="560" cy="1140" rx="20" ry="20" fill="#c9d6fa" />
      <ellipse cx="695" cy="930" rx="10" ry="24" fill="#c9d6fa" />
      <ellipse cx="485" cy="965" rx="14" ry="10" fill="#c9d6fa" />
    </g>
  </MapSvg>
);

/* ---------- data ---------- */
const TABS = [["Map", 62], ["Insert", 62], ["Analysis", 79]];
const TABS2 = [["Edit", 56], ["Imagery", 74], ["Share", 69]];
const CTX = [["Appearance", 96], ["Labeling", 84], ["Data", 54]];

const LAYERS = [
  { name: "RasterT_int_slo1", warn: true, c: "#b5f5c8" },
  { name: "int_slope", ramp: true },
  { name: "slope_1", ramp: true },
  { name: "Contour_North", warn: true, line: true },
  { name: "1elevation", c: "#c8dcf5" },
  { name: "aspect", c: "#f7f7b5" },
  { name: "wui", warn: true, c: "#b5eeb5" },
  { name: "fishnet", c: "#b8c8f2" },
  { name: "fishnet_wui_SpatialJoin", warn: true, c: "#d0e2fa" },
  { name: "California_North_Coast_land_cover1", on: true, c: "#c3cef5" },
  { name: "CA_Counties_TIGER2016", on: true, sel: true, c: "#d9c5f3" },
  { name: "California_Bay_Delta_land cover4", c: "#fbd3bd" },
  { name: "California _ Sierra Nevada_land_cover5", c: "#f6f2c5" },
  { name: "California _ Sacramento_land_cover3", c: "#c9bff0" },
  { name: "California _ Modoc_land_cover2", c: "#eac8f2" },
];

const Big = ({ w, icon, lines, caret, off, h }) => (
  <BigButton $w={w} $off={off}>
    <BigIcon $h={h}>{icon}</BigIcon>
    {lines.map((l, i) => (
      <LabelLine key={l}>{l}{caret && i === lines.length - 1 && <Caret $c={off ? "#bbb" : "#666"} />}</LabelLine>
    ))}
  </BigButton>
);
const BigCaretBelow = ({ w, icon, label }) => (
  <BigButton $w={w}>
    <BigIcon>{icon}</BigIcon>
    <LabelLine>{label}</LabelLine>
    <LabelLine><Caret /></LabelLine>
  </BigButton>
);

const Layer = ({ l }) => (
  <>
    <Row $sel={l.sel}>
      <Triangle />
      <Check>{l.on && <Tick />}</Check>
      {l.warn && <Warn />}
      <LayerName $warn={l.warn}>{l.name}</LayerName>
    </Row>
    {l.ramp ? (
      <Legend $h={73} $top={0}>
        <RampTitle>Value</RampTitle>
        <RampRow>
          <Ramp />
          <RampLabels><span>69</span><span>0</span></RampLabels>
        </RampRow>
      </Legend>
    ) : (
      <Legend>{l.line ? <LineSwatch /> : <Swatch $c={l.c} />}</Legend>
    )}
  </>
);

const ParamField = ({ label, children }) => (
  <Field><FieldLabel>{label}</FieldLabel>{children}</Field>
);
const BigCaret = () => <Caret $big $c="#333" />;

export default function App() {
  return (
    <Page>
      <Global />
      <TopBar>
        <Tab $w={78} $project>Project</Tab>
        {TABS.map(([t, w]) => <Tab key={t} $w={w}>{t}</Tab>)}
        <Tab $w={54} $active>View</Tab>
        {TABS2.map(([t, w]) => <Tab key={t} $w={w}>{t}</Tab>)}
        {CTX.map(([t, w]) => <Tab key={t} $w={w} $ctx>{t}</Tab>)}
        <Spacer />
        <CommandSearch><MagIcon />Command Search (Alt+Q)</CommandSearch>
        <SignIn><LockIcon /><SignText>Not signed in <Caret /></SignText><Bell><BellIcon /></Bell></SignIn>
      </TopBar>

      <Ribbon>
        <Group $w={116}>
          <GroupBody $pad={3} $gap={6}>
            <SmallCol $w={51}>
              <SmallButton $off><GlobeIcon />Global</SmallButton>
              <SmallButton $off><LocalIcon />Local</SmallButton>
              <SmallButton $on><MapThumb />Map</SmallButton>
            </SmallCol>
            <BigCaretBelow w={56} icon={<ConvertIcon />} label="Convert" />
          </GroupBody>
          <GroupLabel>View</GroupLabel>
        </Group>
        <Group $w={54}>
          <GroupBody><Big w={54} icon={<LinkIcon />} lines={["Link", "Views"]} caret /></GroupBody>
          <GroupLabel>Link</GroupLabel>
        </Group>
        <Group $w={586}>
          <GroupBody $pad={5}>
            <Big w={46} h={38} icon={<ResetIcon />} lines={["Reset", "Panes"]} caret />
            <Big w={47} icon={<CatalogPaneIcon />} lines={["Catalog", "Pane"]} />
            <Big w={50} icon={<CatalogViewIcon />} lines={["Catalog", "View"]} />
            <Big w={50} icon={<ContentsIcon />} lines={["Contents"]} />
            <Big w={88} icon={<GeoIcon />} lines={["Geoprocessing"]} />
            <Big w={44} icon={<PythonIcon />} lines={["Python", "window"]} />
            <Big w={43} icon={<TasksIcon />} lines={["Tasks"]} />
            <Big w={47} off icon={<ReviewerIcon />} lines={["Reviewer", "Rules"]} />
            <Big w={68} icon={<WorkflowIcon />} lines={["Workflow", "Manager"]} caret />
            <BigCaretBelow w={44} icon={<AviationIcon />} label="Aviation" />
            <BigCaretBelow w={55} icon={<IndoorsIcon />} label="Indoors" />
          </GroupBody>
          <GroupLabel>Windows</GroupLabel>
        </Group>
        <Group $w={79}>
          <GroupBody $pad={9}>
            <SmallCol $w={70}>
              <SmallButton $pad={1}><AddIcon />Add</SmallButton>
              <SmallButton $pad={1} $off><RemoveIcon />Remove</SmallButton>
            </SmallCol>
          </GroupBody>
          <GroupLabel>Animation</GroupLabel>
        </Group>
        <Group $w={103}>
          <GroupBody><Big w={103} off icon={<PinIcon />} lines={["Enable", "Location"]} caret /></GroupBody>
          <GroupLabel>Device Location <Launcher /></GroupLabel>
        </Group>
        <Group $w={104}>
          <GroupBody $pad={4}>
            <Big w={46} off icon={<DepthIcon />} lines={["Depth", "Priority"]} />
            <Big w={47} off icon={<DrawingIcon />} lines={["Drawing", "Mode"]} caret />
          </GroupBody>
          <GroupLabel>Scene</GroupLabel>
        </Group>
        <Group $w={183}>
          <GroupBody>
            <ClipGrid>
              <span>Mode</span>
              <ClipCombo><Caret $c="#888" /></ClipCombo>
              <span>Distance</span>
              <ClipInput><SpinUp /><SpinDown /></ClipInput>
            </ClipGrid>
          </GroupBody>
          <GroupLabel>View Clipping</GroupLabel>
        </Group>
        <Group $w={116}>
          <GroupBody $pad={4}>
            <Big w={60} icon={<NavigatorIcon />} lines={["Navigator"]} />
            <Big w={48} icon={<CameraIcon />} lines={["Camera"]} />
          </GroupBody>
          <GroupLabel>Navigation</GroupLabel>
        </Group>
      </Ribbon>

      <Workspace>
        <Contents>
          <PaneHeader>
            Contents
            <PaneTools><Caret $big $c="#666" /><PinPane /><CloseGlyph /></PaneTools>
          </PaneHeader>
          <SearchRow>
            <FilterIcon />
            <SearchBox><SearchText>Search</SearchText><MagIcon /><Caret $c="#ccc" /></SearchBox>
          </SearchRow>
          <ViewTabs>
            <HierIcon /><CylinderIcon /><MapBoxIcon /><PencilIcon /><GridPlusIcon /><TagIcon />
          </ViewTabs>
          <OrderTitle>Drawing Order</OrderTitle>
          <LayerList>
            <Legend><Swatch $c="#bccdf5" /></Legend>
            {LAYERS.map(l => <Layer key={l.name} l={l} />)}
          </LayerList>
          <ScrollArrow />
          <ScrollTrack><ScrollThumb /></ScrollTrack>
        </Contents>

        <MapPane>
          <MapTabs>
            <MapTab $w={69}><MapThumb />Map</MapTab>
            <MapTab $w={74} $off $pad={6}><MapThumb /><CjkLabel>图层</CjkLabel><CloseGlyph c="#8a8a8a" /></MapTab>
          </MapTabs>
          <PaneMenu />
          <MapFrame>
            <Canvas><CaliforniaMap /></Canvas>
            <StatusBar>
              <ScaleBox>1:3,418,314 <Caret /></ScaleBox>
              <StatusIcons><StatusGlyphs /></StatusIcons>
              <Coords>116.5154686°W 43.0118465°N <Chevron /></Coords>
              <SelectBar>
                <BarSep />
                <SelectGlyph />&nbsp;Selected Features: 0
                <BarSep /><PauseBars /><BarSep $m={9} /><RefreshIcon />
              </SelectBar>
            </StatusBar>
          </MapFrame>
        </MapPane>

        <GeoPane>
          <PaneHeader $c="#1a6ea8">
            Geoprocessing
            <PaneTools><Caret $big $c="#666" /><PinPane /><CloseGlyph /></PaneTools>
          </PaneHeader>
          <ToolRow>
            <CircleBack />
            <ToolTitle>Spatial Join</ToolTitle>
            <RightEdge><CirclePlus /></RightEdge>
          </ToolRow>
          <ParamTabs>
            <ParamTab $on>Parameters</ParamTab>
            <ParamTab>Environments</ParamTab>
            <RightEdge><HelpIcon /></RightEdge>
          </ParamTabs>
          <Form>
            <ParamField label="Target Features">
              <InputRow><Input $w={266}>fishnet<BigCaret /></Input><FolderIcon /></InputRow>
            </ParamField>
            <ParamField label="Join Features">
              <InputRow><Input $w={266} $pl={5}>California_North_Coast_land_cover1<BigCaret /></Input><FolderIcon /></InputRow>
            </ParamField>
            <ParamField label="Output Feature Class">
              <InputRow><Input $w={266}>fishnet_SpatialJoin</Input><FolderIcon /></InputRow>
            </ParamField>
            <ParamField label="Join Operation">
              <Input $w={298} $pr={10}>Join one to many<BigCaret /></Input>
            </ParamField>
            <CheckRow><Check><Tick /></Check>Keep All Target Features</CheckRow>
            <ParamField label="Match Option">
              <Input $w={298} $pr={10}>Within<BigCaret /></Input>
            </ParamField>
            <ParamField label="Search Radius">
              <InputRow $gap={4}>
                <Input $w={142} />
                <Input $w={152} $pl={1} $pr={10}>Decimal Degrees<BigCaret /></Input>
              </InputRow>
            </ParamField>
            <FieldsRow>
              <Ico $w={6} $h={9} viewBox="0 0 6 9"><path d="M1 1l4 3.500L1 8" fill="none" stroke="#555" strokeWidth="1.2" /></Ico>
              Fields
            </FieldsRow>
            <Footer>
              <RunButton><RunIcon />Run<RunCaret><Caret /></RunCaret></RunButton>
            </Footer>
          </Form>
          <BottomTabs>
            <BottomTab $w={50}>Catalog</BottomTab>
            <BottomTab $w={84} $on>Geoprocessing</BottomTab>
          </BottomTabs>
        </GeoPane>
      </Workspace>
    </Page>
  );
}
